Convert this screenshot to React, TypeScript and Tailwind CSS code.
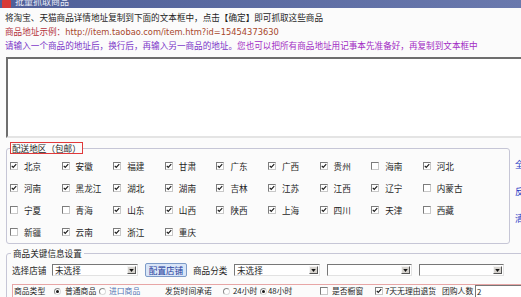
import React from 'react';

type Region = { name: string; on: boolean };

const regions: Region[] = [
  { name: '北京', on: true }, { name: '安徽', on: true }, { name: '福建', on: true },
  { name: '甘肃', on: true }, { name: '广东', on: true }, { name: '广西', on: true },
  { name: '贵州', on: true }, { name: '海南', on: false }, { name: '河北', on: true },
  { name: '河南', on: true }, { name: '黑龙江', on: true }, { name: '湖北', on: true },
  { name: '湖南', on: true }, { name: '吉林', on: true }, { name: '江苏', on: true },
  { name: '江西', on: true }, { name: '辽宁', on: true }, { name: '内蒙古', on: false },
  { name: '宁夏', on: false }, { name: '青海', on: false }, { name: '山东', on: true },
  { name: '山西', on: true }, { name: '陕西', on: true }, { name: '上海', on: true },
  { name: '四川', on: true }, { name: '天津', on: true }, { name: '西藏', on: false },
  { name: '新疆', on: false }, { name: '云南', on: true }, { name: '浙江', on: true },
  { name: '重庆', on: true },
];

const Check = ({ on }: { on: boolean }) => (
  <span className="flex h-[8px] w-[8px] shrink-0 items-center justify-center border border-[#7c7c7c] border-b-[#c8c8c8] border-r-[#c8c8c8] bg-white">
    {on && (
      <svg viewBox="0 0 8 8" className="h-[6px] w-[6px]">
        <path d="M1 3.8 L3 6 L7 1.6" fill="none" stroke="#1a1a1a" strokeWidth="1.5" />
      </svg>
    )}
  </span>
);

const Radio = ({ on }: { on: boolean }) => (
  <span className="flex h-[7px] w-[7px] shrink-0 items-center justify-center rounded-full border border-[#8a8a8a] border-b-[#dadada] border-r-[#dadada] bg-white">
    {on && <span className="h-[3px] w-[3px] rounded-full bg-[#1a1a1a]" />}
  </span>
);

const Select = ({ width, text }: { width: string; text?: string }) => (
  <div className={`flex h-[12px] shrink-0 items-center border border-[#777] border-b-[#e2e2e2] border-r-[#e2e2e2] bg-white ${width}`}>
    <span className="flex-1 pl-[2px] leading-[10px] whitespace-nowrap">{text}</span>
    <span className="mr-[1px] flex h-[8px] w-[9px] items-center justify-center border border-[#f4f4f4] border-b-[#555] border-r-[#555] bg-[#d6d3ce]">
      <svg viewBox="0 0 6 4" className="h-[3px] w-[5px]">
        <path d="M0 0 H6 L3 4 Z" fill="#111" />
      </svg>
    </span>
  </div>
);

export default function App() {
  return (
    <div className="h-[297px] w-[521px] overflow-hidden bg-[#fbfbfb] font-['Noto_Sans_CJK_SC','Liberation_Sans',sans-serif] text-[8.6px] text-[#1e1e1e]">
      {/* title bar, mostly scrolled off */}
      <div className="flex h-[8px] items-end overflow-hidden bg-gradient-to-r from-[#4f5f98] to-[#6a79ad]">
        <div className="flex items-center gap-[4px] pl-[2px]">
          <span className="h-[8px] w-[9px] rounded-[1px] bg-[#d83a36]" />
          <span className="-mt-[5px] leading-[12px] text-[9px] text-[#e8ecf8]">批量抓取商品</span>
        </div>
      </div>

      <div className="px-[5px] pt-[3px] whitespace-nowrap">
        <div className="leading-[13.5px]">将淘宝、天猫商品详情地址复制到下面的文本框中，点击【确定】即可抓取这些商品</div>
        <div className="leading-[13.5px] text-[#b4323c]">
          商品地址示例：<span className="font-['DejaVu_Sans',sans-serif] text-[8.3px] text-[#a8472c]">http://item.taobao.com/item.htm?id=15454373630</span>
        </div>
        <div className="leading-[13.5px]">
          <span className="text-[#7a34c8]">请输入一个商品的地址后，换行后，再输入另一商品的地址。</span>
          <span className="text-[#a22cc4]">您也可以把所有商品地址用记事本先准备好，再复制到文本框中</span>
        </div>
      </div>

      <div className="mt-[4.5px] ml-[6px] h-[81px] w-[530px] border-t-2 border-l-2 border-b-2 border-[#6e6e6e] border-b-[#e4e4e4] bg-white" />

      <div className="mt-[4px] flex">
        <fieldset className="ml-[6px] w-[504px] shrink-0 rounded-[3px] border border-[#c6c6d6] pl-[3px]">
          <legend className="border-[1.5px] border-[#e0393b] px-[1px] leading-[10px]">配送地区（包邮）</legend>
          <div className="grid grid-cols-[repeat(9,51.6px)] pt-[1px]">
            {regions.map((r) => (
              <div key={r.name} className="flex h-[22px] items-center gap-[6px] whitespace-nowrap">
                <Check on={r.on} />
                <span className="leading-[10px]">{r.name}</span>
              </div>
            ))}
          </div>
        </fieldset>
        <div className="ml-[5px] flex flex-col gap-[18px] pt-[17.5px] leading-[9px] whitespace-nowrap text-[#2438c4]">
          <span>全选</span>
          <span>反选</span>
          <span>清空</span>
        </div>
      </div>

      <fieldset className="mt-[3px] ml-[6px] w-[530px] rounded-[3px] border border-[#c6c6d6]">
        <legend className="ml-[4px] px-[2px] leading-[13px]">商品关键信息设置</legend>
        <div className="mt-[2px] flex h-[16px] items-center pl-[5px] whitespace-nowrap">
          <span className="w-[40px] shrink-0">选择店铺</span>
          <Select width="w-[86px]" text="未选择" />
          <button className="ml-[7px] flex h-[14px] w-[42px] shrink-0 items-center justify-center rounded-[2px] border border-[#7d9bc8] bg-[#d9e5f7] leading-[10px] text-[#1d3d9c]">
            配置店铺
          </button>
          <span className="ml-[6px] w-[41px] shrink-0">商品分类</span>
          <Select width="w-[86px]" text="未选择" />
          <span className="ml-[7px]"><Select width="w-[85px]" /></span>
          <span className="ml-[7px]"><Select width="w-[85px]" /></span>
        </div>
        <div className="mt-[6px] ml-[5px] h-[30px] border border-[#e7a6a6] pl-[1px]">
          <div className="flex h-[12px] items-center whitespace-nowrap text-[7.8px] leading-[10px]">
            <span className="w-[40px] shrink-0">商品类型</span>
            <Radio on />
            <span className="ml-[4px] w-[34px] shrink-0">普通商品</span>
            <Radio on={false} />
            <span className="ml-[3px] w-[56px] shrink-0 text-[#5574b4]">进口商品</span>
            <span className="w-[58px] shrink-0">发货时间承诺</span>
            <Radio on={false} />
            <span className="ml-[3px] w-[27px] shrink-0">24小时</span>
            <Radio on />
            <span className="ml-[1px] w-[52px] shrink-0">48小时</span>
            <Check on={false} />
            <span className="ml-[4px] w-[43px] shrink-0">是否橱窗</span>
            <Check on />
            <span className="ml-[2px] w-[57px] shrink-0">7天无理由退货</span>
            <span className="w-[33px] shrink-0">团购人数</span>
            <span className="flex h-[12px] w-[60px] items-center border-t border-l border-[#777] bg-white pl-[1px]">2</span>
          </div>
        </div>
      </fieldset>
    </div>
  );
}
